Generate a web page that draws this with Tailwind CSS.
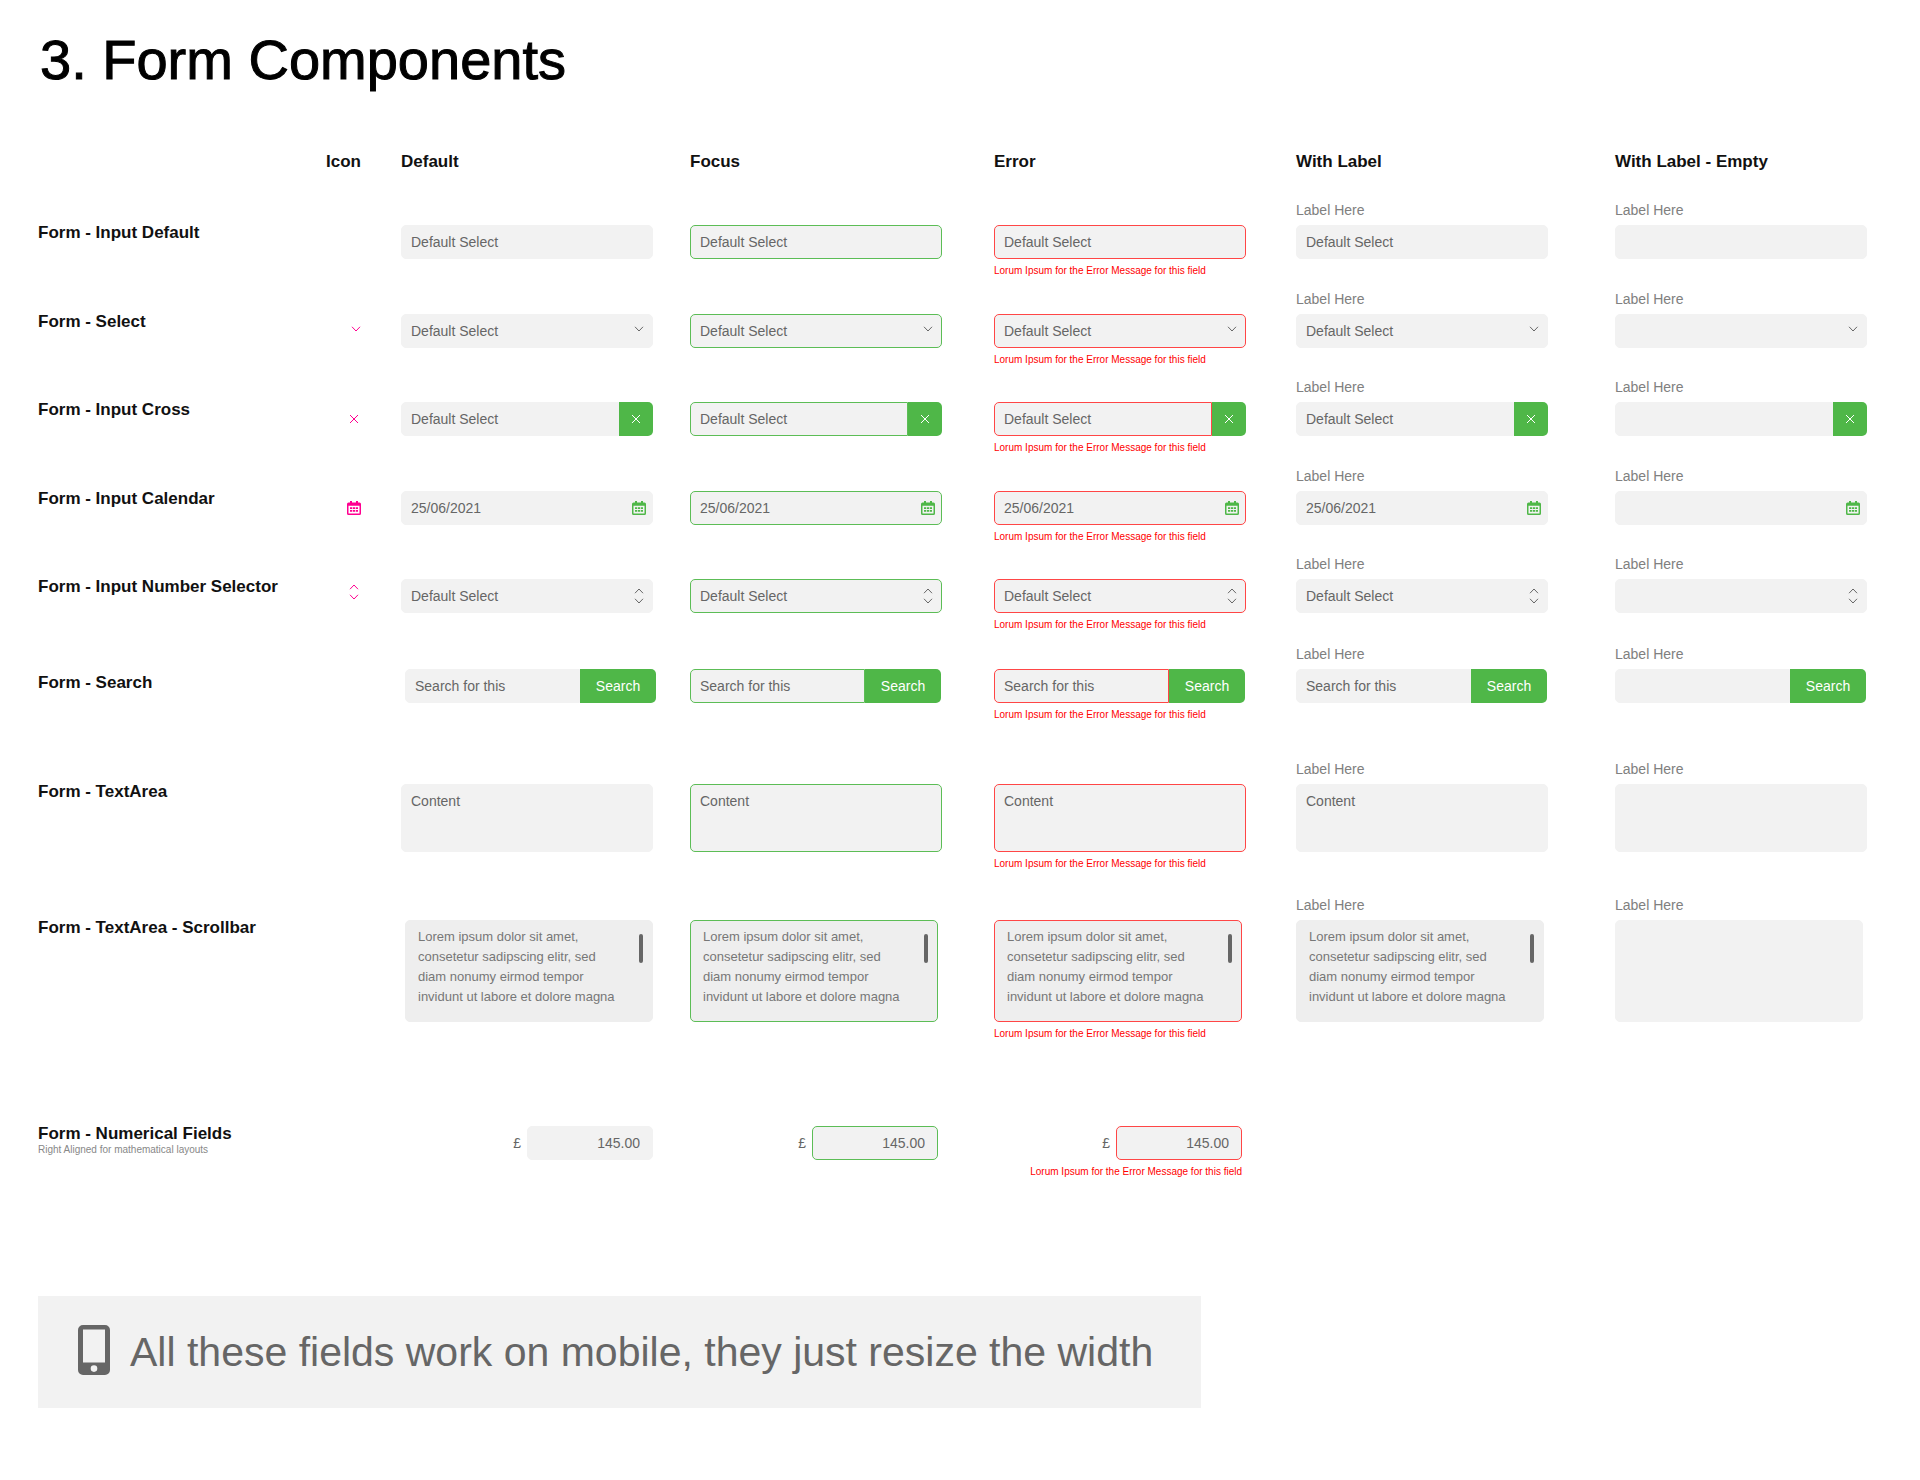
<!DOCTYPE html>
<html lang="en">
<head>
<meta charset="utf-8">
<title>Form Components</title>
<script src="https://cdn.jsdelivr.net/npm/@tailwindcss/browser@4"></script>
</head>
<body class="bg-white font-['Liberation_Sans',Arial,sans-serif] text-sm text-[#666]">
<main class="pl-[38px] pr-[52px] pt-[30px] pb-[72px]">
  <h1 class="pl-[2px] text-[56px] leading-[60px] text-black [-webkit-text-stroke:1px_black]">3. Form Components</h1>

  <header class="mt-[62px] grid grid-cols-[363fr_289fr_304fr_302fr_319fr_253fr] text-[17px] leading-5 text-[#111]">
    <h2 class="pr-[40px] text-right font-bold">Icon</h2>
    <h2 class="font-bold">Default</h2>
    <h2 class="font-bold">Focus</h2>
    <h2 class="font-bold">Error</h2>
    <h2 class="font-bold">With Label</h2>
    <h2 class="font-bold">With Label - Empty</h2>
  </header>

  <div id="rows" class="mt-[29px]"></div>

  <aside class="flex h-28 w-full max-w-[1163px] items-center gap-5 bg-[#f2f2f2] px-10">
    <svg class="mb-1 h-[50px] w-8" viewBox="0 0 32 50" aria-hidden="true">
      <path fill="#666" fill-rule="evenodd" d="M5 0h22a5 5 0 0 1 5 5v40a5 5 0 0 1-5 5H5a5 5 0 0 1-5-5V5a5 5 0 0 1 5-5zM5 4.500v33h22v-33zM16 40.300a3.300 3.300 0 1 0 0 6.600 3.300 3.300 0 0 0 0-6.600z"/>
    </svg>
    <p class="text-[41px] leading-[48px]">All these fields work on mobile, they just resize the width</p>
  </aside>
</main>

<script>
const down = c => `<svg class="${c}" viewBox="0 0 10 6" fill="none" stroke="currentColor" aria-hidden="true"><path d="M1 .8 5 5 9 .8"/></svg>`;
const up = c => `<svg class="${c}" viewBox="0 0 10 6" fill="none" stroke="currentColor" aria-hidden="true"><path d="M1 5.200 5 1 9 5.200"/></svg>`;
const cross = c => `<svg class="${c}" viewBox="0 0 10 10" fill="none" stroke="currentColor" aria-hidden="true"><path d="m1 1 8 8M9 1 1 9"/></svg>`;
const calendar = c => `<svg class="${c}" viewBox="0 0 14 14" fill="currentColor" aria-hidden="true"><path fill-rule="evenodd" d="M3 0h2v1.500h4V0h2v1.500h1.500A1.500 1.500 0 0 1 14 3v9.500a1.500 1.500 0 0 1-1.500 1.500h-11A1.500 1.500 0 0 1 0 12.500V3A1.500 1.500 0 0 1 1.500 1.500H3zM1.500 4.700v7.800h11V4.700z"/><path d="M3 6.300h2.200v1.800H3zm2.900 0h2.200v1.800H5.900zm2.900 0H11v1.800H8.800zM3 9h2.200v1.800H3zm2.900 0h2.200v1.800H5.900zm2.900 0H11v1.800H8.800z"/></svg>`;

const states = ['default', 'focus', 'error', 'label', 'empty'];
const edge = { default: 'border-[#f2f2f2]', focus: 'border-[#5cbd56]', error: 'border-[#ff4646]', label: 'border-[#f2f2f2]', empty: 'border-[#f2f2f2]' };
const greyEdge = { default: 'border-[#eee]', focus: 'border-[#5cbd56]', error: 'border-[#ff4646]', label: 'border-[#eee]', empty: 'border-[#f2f2f2]' };
const lorem = 'Lorem ipsum dolor sit amet,\nconsetetur sadipscing elitr, sed\ndiam nonumy eirmod tempor\ninvidunt ut labore et dolore magna';

const input = (id, value, extra) => `<input id="${id}" type="text" value="${value}" class="min-w-0 flex-1 bg-transparent pl-[9px] outline-none ${extra || ''}">`;

const kinds = {
  text: (id, s, v) => `<div class="flex h-[34px] rounded-[5px] border bg-[#f2f2f2] ${edge[s]}">${input(id, v)}</div>`,
  select: (id, s, v) => `<div class="grid h-[34px] items-center rounded-[5px] border bg-[#f2f2f2] ${edge[s]}">
    <select id="${id}" class="col-start-1 row-start-1 h-full w-full appearance-none bg-transparent pl-[9px] outline-none"><option>${v}</option></select>
    ${down('pointer-events-none col-start-1 row-start-1 mr-2 mb-1 h-1.5 w-2.5 justify-self-end')}</div>`,
  cross: (id, s, v) => `<div class="flex h-[34px]">
    <div class="flex min-w-0 flex-1 rounded-l-[5px] border bg-[#f2f2f2] ${edge[s]}">${input(id, v)}</div>
    <button type="button" aria-label="Clear" class="grid w-[34px] place-items-center rounded-r-[5px] bg-[#4fb748] text-white">${cross('size-2.5')}</button></div>`,
  calendar: (id, s, v) => `<div class="flex h-[34px] rounded-[5px] border bg-[#f2f2f2] ${edge[s]}">${input(id, v)}
    <button type="button" aria-label="Pick a date" class="px-[6px] text-[#4fb748]">${calendar('size-3.5')}</button></div>`,
  number: (id, s, v) => `<div class="flex h-[34px] rounded-[5px] border bg-[#f2f2f2] ${edge[s]}">${input(id, v)}
    <div class="flex flex-col justify-center gap-1 pr-2">
      <button type="button" aria-label="Increase">${up('h-1.5 w-2.5')}</button>
      <button type="button" aria-label="Decrease">${down('h-1.5 w-2.5')}</button>
    </div></div>`,
  search: (id, s, v) => `<div class="flex h-[34px]">
    <div class="flex min-w-0 flex-1 rounded-l-[5px] border bg-[#f2f2f2] ${edge[s]}">${input(id, v)}</div>
    <button type="button" class="w-[76px] rounded-r-[5px] bg-[#4fb748] text-white">Search</button></div>`,
  area: (id, s, v) => `<textarea id="${id}" class="block h-[68px] w-full resize-none overflow-hidden rounded-[5px] border bg-[#f2f2f2] px-[9px] py-[6px] leading-5 outline-none ${edge[s]}">${v}</textarea>`,
  scroll: (id, s, v) => `<div class="grid">
    <textarea id="${id}" class="col-start-1 row-start-1 h-[102px] resize-none overflow-hidden rounded-[5px] border ${s === 'empty' ? 'bg-[#f2f2f2]' : 'bg-[#eee]'} px-3 py-[6px] text-[13px] leading-5 text-[#777] outline-none ${greyEdge[s]}">${v}</textarea>
    ${v ? '<span class="col-start-1 row-start-1 mt-[14px] mr-[10px] h-[29px] w-1 justify-self-end rounded-full bg-[#666]"></span>' : ''}</div>`,
  numeric: (id, s, v) => `<div class="flex items-center justify-end gap-[6px]"><label for="${id}">£</label>
    <div class="flex h-[34px] w-[126px] rounded-[5px] border bg-[#f2f2f2] ${edge[s]}">${input(id, v, 'pr-3 text-right')}</div></div>`
};

const rows = [
  { name: 'Form - Input Default', kind: 'text', value: 'Default Select', height: 'min-h-[89px]', width: 'max-w-[252px]' },
  { name: 'Form - Select', kind: 'select', value: 'Default Select', height: 'min-h-[88px]', width: 'max-w-[252px]', icon: down('mb-1 h-1.5 w-2.5') },
  { name: 'Form - Input Cross', kind: 'cross', value: 'Default Select', height: 'min-h-[89px]', width: 'max-w-[252px]', icon: cross('mr-[2px] size-2.5') },
  { name: 'Form - Input Calendar', kind: 'calendar', value: '25/06/2021', height: 'min-h-[88px]', width: 'max-w-[252px]', icon: calendar('size-3.5') },
  { name: 'Form - Input Number Selector', kind: 'number', value: 'Default Select', height: 'min-h-[90px]', width: 'max-w-[252px]', icon: `<span class="mr-[2px] mb-2 flex flex-col gap-1">${up('h-1.5 w-2.5')}${down('h-1.5 w-2.5')}</span>` },
  { name: 'Form - Search', kind: 'search', value: 'Search for this', height: 'min-h-[115px]', width: 'max-w-[251px]', nameTop: 'pt-7', inset: 'ml-1' },
  { name: 'Form - TextArea', kind: 'area', value: 'Content', height: 'min-h-[136px]', width: 'max-w-[252px]' },
  { name: 'Form - TextArea - Scrollbar', kind: 'scroll', value: lorem, height: 'min-h-[206px]', width: 'max-w-[248px]', inset: 'ml-1' },
  { name: 'Form - Numerical Fields', kind: 'numeric', value: '145.00', height: 'min-h-[194px]', width: 'max-w-[248px]', inset: 'ml-1', note: 'Right Aligned for mathematical layouts', only: 3 }
];

document.getElementById('rows').innerHTML = rows.map(r => `
<section class="grid grid-cols-[363fr_289fr_304fr_302fr_319fr_253fr] items-start ${r.height}">
  <div class="flex justify-between pr-[40px]">
    <div class="${r.nameTop || 'pt-[22px]'}">
      <h3 class="text-[17px] leading-5 font-bold text-[#111]">${r.name}</h3>
      ${r.note ? `<p class="text-[10px] leading-3 text-[#888]">${r.note}</p>` : ''}
    </div>
    <div class="mt-6 flex h-[34px] items-center text-[#ff0090]">${r.icon || ''}</div>
  </div>
  ${states.slice(0, r.only || 5).map(s => {
    const id = `${r.kind}-${s}`;
    const labelled = s === 'label' || s === 'empty';
    return `<div class="${r.width} ${s === 'default' ? r.inset || '' : ''} ${labelled ? '' : 'pt-6'}">
      ${labelled ? `<label for="${id}" class="block h-6 leading-[18px] text-[#808080]">Label Here</label>` : ''}
      ${kinds[r.kind](id, s, s === 'empty' ? '' : r.value)}
      ${s === 'error' ? `<p class="pt-[5px] text-[10px] leading-[14px] text-[#ff0000] ${r.kind === 'numeric' ? 'text-right' : ''}">Lorum Ipsum for the Error Message for this field</p>` : ''}
    </div>`;
  }).join('')}
</section>`).join('');
</script>
</body>
</html>
